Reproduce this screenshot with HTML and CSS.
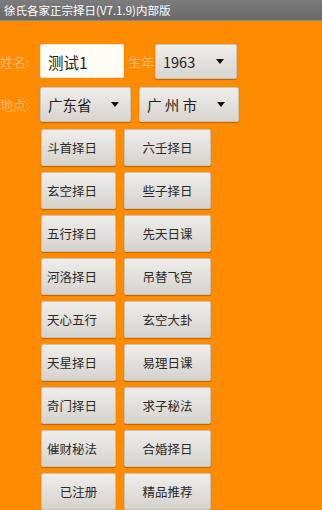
FILE: index.html
```html
<!DOCTYPE html>
<html lang="zh-CN">
<head>
    <meta charset="UTF-8">
    <meta name="viewport" content="width=device-width, initial-scale=1.0">
    <title>徐氏各家正宗择日</title>
    <link rel="stylesheet" href="styles.css">
</head>
<body>
    <!-- 标题栏 -->
    <div class="title-bar">徐氏各家正宗择日(V7.1.9)内部版</div>

    <!-- 表单 -->
    <div class="form">
        <div class="form-row first">
            <span class="label">姓名:</span>
            <div class="name-input">测试1</div>
            <span class="label year-label">生年</span>
            <div class="spinner year">
                <span>1963</span>
                <i class="arrow"></i>
            </div>
        </div>
        <div class="form-row">
            <span class="label">地点:</span>
            <div class="spinner province">
                <span>广东省</span>
                <i class="arrow"></i>
            </div>
            <div class="spinner city">
                <span>广 州 市</span>
                <i class="arrow"></i>
            </div>
        </div>
    </div>

    <!-- 功能按钮 -->
    <div class="menu">
        <button class="btn left">斗首择日</button>
        <button class="btn">六壬择日</button>
        <button class="btn left">玄空择日</button>
        <button class="btn">些子择日</button>
        <button class="btn left">五行择日</button>
        <button class="btn">先天日课</button>
        <button class="btn left">河洛择日</button>
        <button class="btn">吊替飞宫</button>
        <button class="btn left">天心五行</button>
        <button class="btn">玄空大卦</button>
        <button class="btn left">天星择日</button>
        <button class="btn">易理日课</button>
        <button class="btn left">奇门择日</button>
        <button class="btn">求子秘法</button>
        <button class="btn left">催财秘法</button>
        <button class="btn">合婚择日</button>
        <button class="btn">已注册</button>
        <button class="btn">精品推荐</button>
    </div>
</body>
</html>
```

FILE: styles.css
```css
* {
    margin: 0;
    padding: 0;
    box-sizing: border-box;
    font-family: "Noto Sans CJK SC", "Noto Sans", sans-serif;
}

body {
    background-color: #ff8c00;
    height: 510px;
    overflow: hidden;
}

/* 标题栏 */
.title-bar {
    height: 21px;
    line-height: 20px;
    padding-left: 4px;
    color: #fff;
    font-size: 11.5px;
    background: linear-gradient(#7c7c7c, #686868);
    border-bottom: 1px solid #8a8a8a;
}

/* 表单 */
.form {
    padding-top: 23px;
}

.form-row {
    display: flex;
    align-items: center;
    height: 35px;
    margin-bottom: 7px;
}

.form-row.first {
    margin-bottom: 8px;
}

.label {
    width: 40px;
    font-size: 13px;
    color: #fcb56c;
}

.year-label {
    width: 27px;
    margin-left: 4px;
}

.name-input {
    width: 84px;
    height: 34px;
    margin-bottom: 1px;
    padding-left: 7px;
    font-size: 15.5px;
    line-height: 34px;
    color: #222;
    background-color: #fffdf6;
    border: 1px solid #f3e4cc;
    border-radius: 2px;
}

.spinner {
    display: flex;
    align-items: center;
    justify-content: space-between;
    height: 35px;
    padding: 0 12px 0 7px;
    font-size: 14.5px;
    color: #222;
    background: linear-gradient(#efedea, #d8d5d0);
    border: 1px solid #c9c4bc;
    border-radius: 2px;
    box-shadow: 0 1px 1px rgba(120, 60, 0, 0.5);
}

.spinner.year {
    width: 82px;
}

.spinner.province {
    width: 91px;
    padding-right: 11px;
}

.spinner.city {
    width: 100px;
    margin-left: 8px;
    padding-right: 13px;
}

.arrow {
    width: 0;
    height: 0;
    border-left: 4.5px solid transparent;
    border-right: 4.5px solid transparent;
    border-top: 5px solid #111;
}

/* 功能按钮 */
.menu {
    display: grid;
    grid-template-columns: 75px 87px;
    grid-auto-rows: 37px;
    column-gap: 8px;
    row-gap: 6px;
    padding-left: 41px;
}

.btn {
    font-size: 12.5px;
    color: #2a2a2a;
    background: linear-gradient(#efedea, #d6d3ce);
    border: 1px solid #c8c2b8;
    border-radius: 2px;
    box-shadow: 0 1px 1px rgba(120, 60, 0, 0.5);
    cursor: pointer;
}

.btn.left {
    text-align: left;
    padding-left: 5px;
}
```
